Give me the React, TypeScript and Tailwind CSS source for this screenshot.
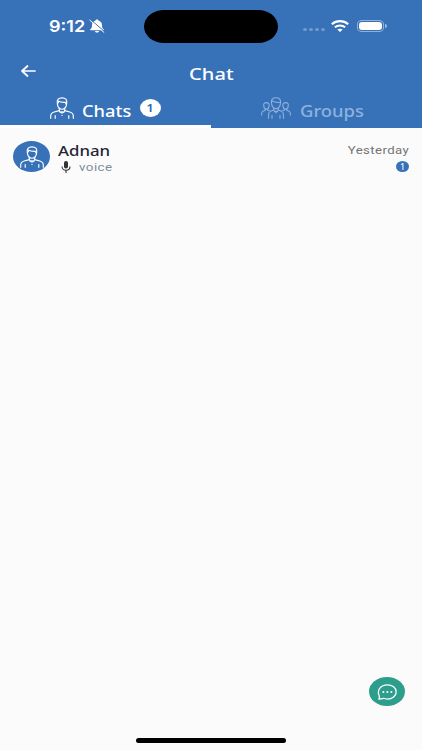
import type { ReactNode } from "react"
import { clsx } from "clsx"

const ICON_PROPS = {
  fill: "none",
  stroke: "currentColor",
  strokeLinecap: "round",
  strokeLinejoin: "round",
  preserveAspectRatio: "none",
} as const

/**
 * Bust of a person with a collar and buttoned shirt.
 */
function PersonIcon({ className }: { className?: string }) {
  return (
    <svg viewBox="0 0 24 22" strokeWidth={1.15} className={className} {...ICON_PROPS}>
      <path d="M7.300 6.400C6.700 2.700 8.500.8 12 .8s5.300 1.900 4.700 5.600c-.3 3.500-2.400 5.800-4.700 5.800S7.600 9.900 7.300 6.400Z" />
      <path d="M7.600 3.700c2.300 1.400 5.600 2 8.900 1.600M8.600 4.400 8.300 6M15.800 5.400v1.400" />
      <path d="M9.300 11.300v2.300L4.200 15C1.800 15.700.7 17 .7 19v2.300M14.700 11.300v2.300l5.100 1.400c2.400.7 3.500 2 3.500 4v2.300" />
      <path d="m9.300 13.600 1 1.800 1.700-.6 1.700.6 1-1.800M12 15v1.300M12 18.200v.2M5.200 18.600v2.700M18.800 18.600v2.700" />
    </svg>
  )
}

/**
 * Three people, the middle one in front.
 */
function GroupIcon({ className }: { className?: string }) {
  return (
    <svg viewBox="0 0 30 22" strokeWidth={1.1} className={className} {...ICON_PROPS}>
      <path d="M10.500 6C10 2.500 11.500.8 15 .8s5 1.700 4.500 5.200c-.3 3.500-2.200 5.600-4.500 5.600S10.800 9.500 10.500 6Z" />
      <path d="M10.800 3.800c2.200 1.300 5.300 1.900 8.500 1.500" />
      <path d="M12.800 11v2.100l-2.800 1c-1.700.6-2.400 1.700-2.400 3.300v3.900M17.200 11v2.100l2.800 1c1.700.6 2.400 1.700 2.400 3.300v3.900" />
      <path d="m12.800 13.100 1 1.700 1.200-.5 1.200.5 1-1.700M15 15v1M11 18.300v3M19 18.300v3" />
      <path d="M2.700 8.700c-.3-2 .8-3.100 2.700-3.100s3 1.100 2.700 3.100c-.2 2.200-1.300 3.400-2.700 3.400S2.900 10.900 2.700 8.700ZM4.300 12v1.300l-2 .7C1.100 14.500.6 15.400.6 16.600v1.400M6.600 12v1l1.500.6" />
      <path d="M21.900 8.700c-.3-2 .8-3.100 2.700-3.100s3 1.100 2.700 3.100c-.2 2.200-1.300 3.400-2.700 3.400s-2.500-1.200-2.700-3.400ZM25.700 12v1.300l2 .7c1.200.5 1.700 1.400 1.700 2.600v1.400M23.400 12v1l-1.500.6" />
    </svg>
  )
}

function BellOffIcon() {
  return (
    <svg viewBox="0 0 16 14" preserveAspectRatio="none" className="ml-[3px] h-[14px] w-[16px]">
      <path
        d="M8 .5c.9 0 1.400.5 1.400 1.100 2.400.6 3.600 2.300 3.600 4.600 0 2.500.6 3.200 1.800 4.100v1H1.200v-1C2.400 9.400 3 8.700 3 6.200c0-2.300 1.200-4 3.600-4.600C6.600 1 7.100.5 8 .5ZM6 11.900h4c-.2 1-.9 1.600-2 1.600s-1.800-.6-2-1.600Z"
        fill="currentColor"
      />
      <path d="M1.600.6 15.600 12.600" stroke="#3771b8" strokeWidth="1" />
      <path d="M.8 1.200 14.900 13.300" stroke="currentColor" strokeWidth="1" strokeLinecap="round" />
    </svg>
  )
}

function WifiIcon() {
  return (
    <svg viewBox="0 0 18 12" fill="none" stroke="currentColor" preserveAspectRatio="none" className="h-[12px] w-[18px]">
      <path d="M.8 4.200c4.700-4.100 11.700-4.100 16.400 0" strokeWidth="2.100" />
      <path d="M3.800 7.300c3-2.500 7.400-2.500 10.400 0" strokeWidth="2" />
      <path d="M6.300 9.600c1.600-1.300 3.800-1.300 5.400 0L9 12Z" fill="currentColor" stroke="none" />
    </svg>
  )
}

function StatusBar() {
  return (
    <div className="flex h-[52px] items-center">
      <div className="flex w-[144px] items-center pl-[49px]">
        <span className="w-[37px] origin-left scale-x-[1.130] whitespace-nowrap font-['Inter'] text-[16px] leading-none font-semibold">
          9:12
        </span>
        <BellOffIcon />
      </div>
      <div className="h-[33px] w-[134px] rounded-[20px/16.5px] bg-black" />
      <div className="flex items-center pl-[25px]">
        <div className="mt-[7px] flex gap-[2px]">
          {[0, 1, 2, 3].map((dot) => (
            <span key={dot} className="h-[3px] w-[4px] rounded-[50%] bg-white/30" />
          ))}
        </div>
        <div className="ml-[6px]">
          <WifiIcon />
        </div>
        <div className="ml-[8px] h-[12px] w-[27px] rounded-[5px/4px] border border-white/45 p-px">
          <div className="h-full rounded-[3px] bg-white" />
        </div>
        <span className="ml-px h-[4px] w-[2px] rounded-r-full bg-white/50" />
      </div>
    </div>
  )
}

interface TabProps {
  active?: boolean
  children: ReactNode
}

function Tab({ active, children }: TabProps) {
  return (
    <button
      role="tab"
      aria-selected={!!active}
      className={clsx(
        "flex h-full w-[211px] items-start border-b-[3px] pl-[50px]",
        active ? "border-white text-white" : "border-transparent text-[#8db2dd]"
      )}
    >
      {children}
    </button>
  )
}

function Header() {
  return (
    <header className="h-[128px] bg-[#3771b8] text-white">
      <StatusBar />
      <div className="grid h-[42px] grid-cols-3 items-start">
        <button aria-label="Back" className="pt-[13px] pl-[21px]">
          <svg viewBox="0 0 15 12" strokeWidth={1.700} className="block h-[12px] w-[15px]" {...ICON_PROPS}>
            <path d="M6.500 1 1 6l5.500 5M1.300 6H14" />
          </svg>
        </button>
        <h1 className="scale-x-[1.180] pt-[12px] text-center text-[17px] leading-[20px] font-medium">Chat</h1>
      </div>
      <div role="tablist" className="flex h-[34px]">
        <Tab active>
          <PersonIcon className="mt-[3px] h-[22px] w-[24px]" />
          <span className="mt-[7px] ml-[8px] w-[50px] origin-left scale-x-[1.140] text-left text-[16px] leading-[20px] font-medium">
            Chats
          </span>
          <span className="mt-[5px] ml-[8px] flex h-[18px] w-[21px] items-center justify-center rounded-[50%] bg-white text-[11px] font-semibold text-[#2f66aa]">
            <span className="scale-x-[1.2]">1</span>
          </span>
        </Tab>
        <Tab>
          <GroupIcon className="mt-[3px] h-[22px] w-[30px]" />
          <span className="mt-[7px] ml-[9px] origin-left scale-x-[1.150] text-[16px] leading-[20px] font-medium">
            Groups
          </span>
        </Tab>
      </div>
    </header>
  )
}

function ChatRow() {
  return (
    <div className="flex items-start px-[13px] pt-[13px]">
      <div className="flex h-[31px] w-[37px] items-center justify-center rounded-[50%] bg-[#3771b8] text-white">
        <PersonIcon className="h-[22px] w-[24px]" />
      </div>
      <div className="ml-[8px] flex-1">
        <div className="w-fit origin-left scale-x-[1.200] text-[14px] leading-[20px] font-medium text-[#252535]">
          Adnan
        </div>
        <div className="-mt-px flex h-[13px] items-center pl-[3px]">
          <svg viewBox="0 0 10 12" preserveAspectRatio="none" className="h-[12px] w-[10px] text-[#333]">
            <rect x="3" y="0" width="4" height="7.500" rx="1.900" fill="currentColor" />
            <path d="M1 5.500c0 5 8 5 8 0M5 9.300V12" fill="none" stroke="currentColor" strokeWidth="1.100" />
          </svg>
          <span className="mt-px ml-[8px] origin-left scale-x-[1.160] font-['Roboto'] text-[11.500px] leading-[12px] tracking-[0.4px] text-[#7f8d9c]">
            voice
          </span>
        </div>
      </div>
      <div className="flex flex-col items-end">
        <span className="mt-[3px] -mr-[0.5px] origin-right scale-x-[1.200] font-['Roboto'] text-[11px] leading-[14px] tracking-[0.350px] text-[#737373]">
          Yesterday
        </span>
        <span className="mt-[3px] flex h-[11px] w-[13px] items-center justify-center rounded-[50%] bg-[#3771b8] text-[8px] font-medium text-white">
          1
        </span>
      </div>
    </div>
  )
}

export default function App() {
  return (
    <div className="flex h-[750px] w-[422px] flex-col overflow-hidden bg-[#fbfbfb] font-['Noto_Sans',sans-serif]">
      <Header />
      <main className="flex-1">
        <ChatRow />
      </main>
      <div className="flex justify-end pr-[17px]">
        <button
          aria-label="New chat"
          className="flex h-[29px] w-[36px] items-center justify-center rounded-[50%] bg-[#2e9e8c] text-white"
        >
          <svg viewBox="0 0 20 16" strokeWidth={1.250} className="h-[16px] w-[20px]" {...ICON_PROPS}>
            <path d="M1.700 15.100c.9-1 .9-2.200.4-3.500C-.3 5.900 3.800.8 10.300.8c5 0 8.900 3.100 8.900 7.100s-3.900 7.100-8.900 7.100c-1.400 0-2.600-.2-3.700-.7-1.600.5-3.200.8-4.900.8Z" />
            <path d="M6.300 8h.1M10.300 8h.1M14.300 8h.1" strokeWidth="2" />
          </svg>
        </button>
      </div>
      <div className="mt-[32px] mb-[7px] h-[5px] w-[150px] self-center rounded-full bg-black" />
    </div>
  )
}
